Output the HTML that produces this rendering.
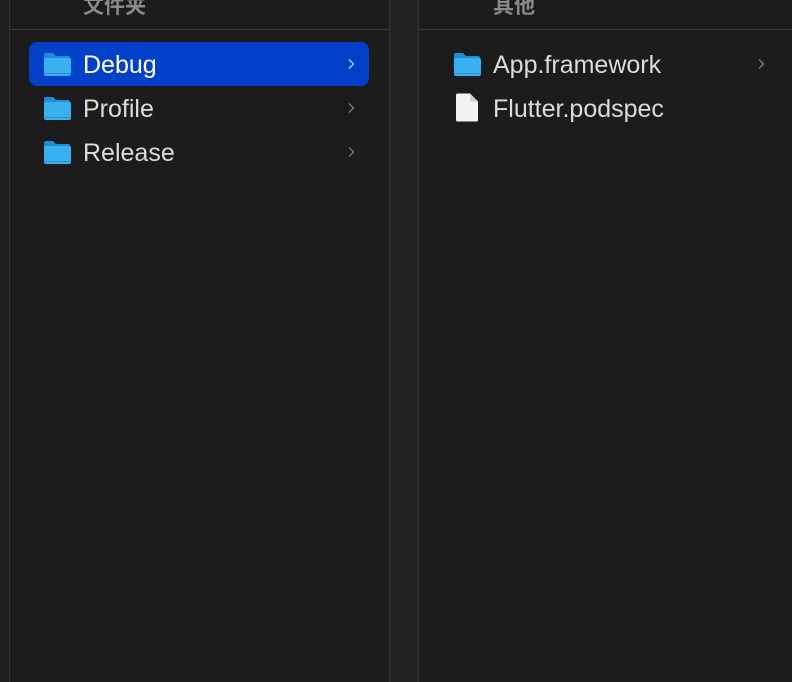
<!DOCTYPE html>
<html><head><meta charset="utf-8"><style>
body{margin:0;width:792px;height:682px;background:#1c1c1c;overflow:hidden;position:relative;font-family:"Liberation Sans","Noto Sans CJK SC",sans-serif;}
.v{position:absolute;top:0;bottom:0;width:1px;background:#333;}
.hdr{position:absolute;top:-10px;font-size:21px;color:#8a8a8a;font-weight:bold;}
.hl{position:absolute;top:29px;height:1px;background:#3a3a3a;}
.row{position:absolute;height:44px;line-height:44px;font-size:25px;color:#dcdcdc;}
.sel{background:#0340c9;border-radius:8px;color:#fff;}
.row svg.f{position:absolute;left:14px;top:9px;}
.row span{position:absolute;left:54px;top:1px;}
.chev{position:absolute;top:15px;}
</style></head><body>
<div style="position:absolute;left:0;top:0;width:9px;bottom:0;background:#1f1f1f"></div>
<div class="v" style="left:9px"></div>
<div style="position:absolute;left:390px;top:0;width:28px;bottom:0;background:#222"></div>
<div class="v" style="left:389px"></div>
<div class="v" style="left:418px"></div>
<div class="hl" style="left:10px;width:379px"></div>
<div class="hl" style="left:419px;width:373px"></div>
<div class="hdr" style="left:83px">文件夹</div>
<div class="hdr" style="left:493px">其他</div>

<svg width="0" height="0" style="position:absolute"><defs>
<symbol id="fd" viewBox="0 0 28 26"><path d="M1 4a2 2 0 0 1 2-2h7l3 3h12a2 2 0 0 1 2 2v2H1z" fill="#1d8fd6"/><rect x="1" y="7" width="27" height="18" rx="2" fill="#3bb0f0"/><rect x="1" y="22" width="27" height="1" fill="#2a8fd0"/></symbol>
</defs></svg>

<div class="row sel" style="left:29px;top:42px;width:340px"><svg class="f" width="28" height="26"><use href="#fd"/></svg><span>Debug</span>
<svg class="chev" style="left:317px" width="10" height="14"><path d="M3 2.5l4.5 4.5-4.5 4.5" stroke="#dde4ff" stroke-width="1.2" fill="none"/></svg></div>
<div class="row" style="left:29px;top:86px;width:340px"><svg class="f" width="28" height="26"><use href="#fd"/></svg><span>Profile</span>
<svg class="chev" style="left:317px" width="10" height="14"><path d="M3 2.5l4.5 4.5-4.5 4.5" stroke="#888" stroke-width="1.2" fill="none"/></svg></div>
<div class="row" style="left:29px;top:130px;width:340px"><svg class="f" width="28" height="26"><use href="#fd"/></svg><span>Release</span>
<svg class="chev" style="left:317px" width="10" height="14"><path d="M3 2.5l4.5 4.5-4.5 4.5" stroke="#888" stroke-width="1.2" fill="none"/></svg></div>

<div class="row" style="left:439px;top:42px;width:340px"><svg class="f" width="28" height="26"><use href="#fd"/></svg><span>App.framework</span>
<svg class="chev" style="left:317px" width="10" height="14"><path d="M3 2.5l4.5 4.5-4.5 4.5" stroke="#888" stroke-width="1.2" fill="none"/></svg></div>
<div class="row" style="left:439px;top:86px;width:340px"><svg class="f" style="left:16px;top:7px" width="24" height="30"><path d="M1 2a1.5 1.5 0 0 1 1.5-1.5H15l8 8V27a1.5 1.5 0 0 1-1.5 1.5h-19A1.5 1.5 0 0 1 1 27z" fill="#f2f2f2"/><path d="M15 .5V7a1.5 1.5 0 0 0 1.5 1.5H23" fill="#d0d0d0"/></svg><span>Flutter.podspec</span></div>
</body></html>
